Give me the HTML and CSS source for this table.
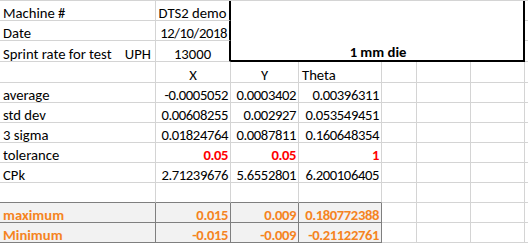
FILE: index.html
```html
<!DOCTYPE html>
<html>
<head>
<meta charset="utf-8">
<link rel="stylesheet" href="styles.css">
</head>
<body>
<div class="sheet">
  <!-- row 1 -->
  <div class="c r1">Machine #</div>
  <div class="c r1 ctr edge">DTS2 demo</div>
  <div class="merged">1 mm die</div>
  <div class="c r1 tail"></div>
  <!-- row 2 -->
  <div class="c r2">Date</div>
  <div class="c r2 num edge">12/10/2018</div>
  <div class="c r2 tail"></div>
  <!-- row 3 -->
  <div class="c r3">Sprint rate for test    UPH</div>
  <div class="c r3 ctr edge">13000</div>
  <div class="c r3 tail"></div>
  <!-- row 4 -->
  <div class="c r4"></div>
  <div class="c r4 ctr">X</div>
  <div class="c r4 ctr">Y</div>
  <div class="c r4">Theta</div>
  <div class="c r4"></div><div class="c r4"></div><div class="c r4"></div><div class="c r4 tail"></div>
  <!-- row 5 -->
  <div class="c">average</div>
  <div class="c num">-0.0005052</div>
  <div class="c num">0.0003402</div>
  <div class="c num">0.00396311</div>
  <div class="c"></div><div class="c"></div><div class="c"></div><div class="c tail"></div>
  <!-- row 6 -->
  <div class="c">std dev</div>
  <div class="c num">0.00608255</div>
  <div class="c num">0.002927</div>
  <div class="c num">0.053549451</div>
  <div class="c"></div><div class="c"></div><div class="c"></div><div class="c tail"></div>
  <!-- row 7 -->
  <div class="c">3 sigma</div>
  <div class="c num">0.01824764</div>
  <div class="c num">0.0087811</div>
  <div class="c num">0.160648354</div>
  <div class="c"></div><div class="c"></div><div class="c"></div><div class="c tail"></div>
  <!-- row 8 -->
  <div class="c">tolerance</div>
  <div class="c num red">0.05</div>
  <div class="c num red">0.05</div>
  <div class="c num red">1</div>
  <div class="c"></div><div class="c"></div><div class="c"></div><div class="c tail"></div>
  <!-- row 9 -->
  <div class="c">CPk</div>
  <div class="c num">2.71239676</div>
  <div class="c num">5.6552801</div>
  <div class="c num">6.200106405</div>
  <div class="c"></div><div class="c"></div><div class="c"></div><div class="c tail"></div>
  <!-- row 10 -->
  <div class="c dark-b"></div>
  <div class="c dark-b"></div>
  <div class="c dark-b"></div>
  <div class="c dark-b"></div>
  <div class="c"></div><div class="c"></div><div class="c"></div><div class="c tail"></div>
  <!-- row 11 -->
  <div class="c box orange">maximum</div>
  <div class="c box num orange">0.015</div>
  <div class="c box num orange">0.009</div>
  <div class="c box num orange">0.180772388</div>
  <div class="c"></div><div class="c"></div><div class="c"></div><div class="c tail"></div>
  <!-- row 12 -->
  <div class="c box orange">Minimum</div>
  <div class="c box num orange">-0.015</div>
  <div class="c box num orange">-0.009</div>
  <div class="c box num orange">-0.21122761</div>
  <div class="c"></div><div class="c"></div><div class="c"></div><div class="c tail"></div>
</div>
</body>
</html>
```

FILE: styles.css
```css
html, body {
  margin: 0;
  padding: 0;
  background: #ffffff;
}

body {
  width: 528px;
  height: 245px;
  overflow: hidden;
  font-family: Carlito, "Liberation Sans", Arial, sans-serif;
  font-size: 14.67px;
  color: #000000;
}

.sheet {
  display: grid;
  grid-template-columns: 156px 75px 68px 83px 35px 54px 54px 1fr;
  grid-template-rows: 20px 20px 21px 21px repeat(8, 20px);
  border-top: 1px solid #d4d4d4;
}

.c {
  box-sizing: border-box;
  border-right: 1px solid #d4d4d4;
  border-bottom: 1px solid #d4d4d4;
  display: flex;
  align-items: flex-end;
  justify-content: flex-start;
  padding: 0 2px 0 3px;
  line-height: 14px;
  white-space: pre;
  overflow: visible;
  min-width: 0;
}

.ctr {
  justify-content: center;
  padding: 0;
}

.num {
  justify-content: flex-end;
  letter-spacing: -0.4px;
}

.edge {
  border-right: 2px solid #000000;
}

.tail {
  border-right: none;
}

.merged {
  grid-column: 3 / 8;
  grid-row: 1 / 4;
  box-sizing: border-box;
  border-right: 2px solid #000000;
  border-bottom: 2px solid #000000;
  display: flex;
  align-items: flex-end;
  justify-content: center;
  font-weight: bold;
  line-height: 14px;
  padding-bottom: 1px;
  padding-left: 2px;
}

.red {
  color: #ff0000;
  font-weight: bold;
}

.dark-b {
  border-bottom-color: #7f7f7f;
}

.box {
  background: #f2f2f2;
  border-bottom-color: #7f7f7f;
  border-right-color: #7f7f7f;
}

.orange {
  color: #f5841f;
  font-weight: bold;
}
```
